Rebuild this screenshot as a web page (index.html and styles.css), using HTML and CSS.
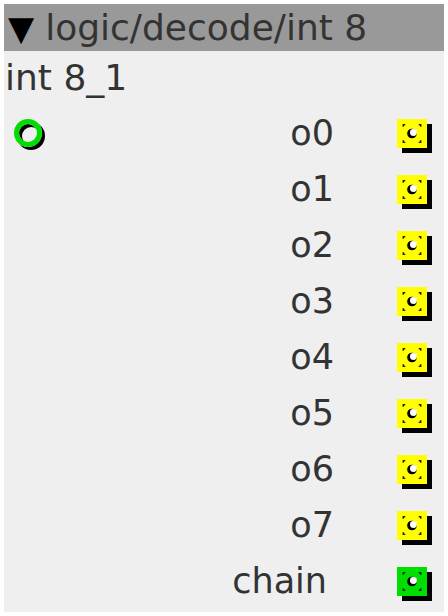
FILE: index.html
```html
<!DOCTYPE html>
<html lang="en">
<head>
  <meta charset="UTF-8" />
  <title>logic/decode/int 8</title>
  <link rel="stylesheet" href="styles.css">
</head>
<body>
  <div class="node">
    <div class="node-header">
      <span class="caret">&#9660;</span>
      <span class="node-title">logic/decode/int 8</span>
    </div>
    <div class="node-name">int 8_1</div>

    <div class="node-body">
      <div class="inlets">
        <div class="port-row">
          <span class="inlet"></span>
        </div>
      </div>

      <div class="outlets">
        <div class="port-row"><span class="label">o0</span><span class="outlet"><svg viewBox="0 0 30 30"><use href="#jack"/></svg></span></div>
        <div class="port-row"><span class="label">o1</span><span class="outlet"><svg viewBox="0 0 30 30"><use href="#jack"/></svg></span></div>
        <div class="port-row"><span class="label">o2</span><span class="outlet"><svg viewBox="0 0 30 30"><use href="#jack"/></svg></span></div>
        <div class="port-row"><span class="label">o3</span><span class="outlet"><svg viewBox="0 0 30 30"><use href="#jack"/></svg></span></div>
        <div class="port-row"><span class="label">o4</span><span class="outlet"><svg viewBox="0 0 30 30"><use href="#jack"/></svg></span></div>
        <div class="port-row"><span class="label">o5</span><span class="outlet"><svg viewBox="0 0 30 30"><use href="#jack"/></svg></span></div>
        <div class="port-row"><span class="label">o6</span><span class="outlet"><svg viewBox="0 0 30 30"><use href="#jack"/></svg></span></div>
        <div class="port-row"><span class="label">o7</span><span class="outlet"><svg viewBox="0 0 30 30"><use href="#jack"/></svg></span></div>
        <div class="port-row"><span class="label chain-label">chain</span><span class="outlet chain"><svg viewBox="0 0 30 30"><use href="#jack"/></svg></span></div>
      </div>
    </div>
  </div>

  <!-- shared jack glyph -->
  <svg class="defs" width="0" height="0">
    <defs>
      <g id="jack">
        <path d="M6 8v-2h2 M22 6h2v2 M6 22v2h2 M24 22v2h-2" fill="none" stroke="#222" stroke-width="1.5"/>
        <circle cx="15" cy="15" r="5" fill="#000"/>
        <circle cx="16.5" cy="14" r="3.6" fill="#fff"/>
      </g>
    </defs>
  </svg>
</body>
</html>
```

FILE: styles.css
```css
* {
  box-sizing: border-box;
  margin: 0;
  padding: 0;
}

body {
  background: #ffffff;
  font-family: 'DejaVu Sans', sans-serif;
  color: #333333;
}

.node {
  margin: 4px;
  width: 440px;
  height: 608px;
  background: #efefef;
}

.node-header {
  height: 47px;
  background: #999999;
  display: flex;
  align-items: center;
  gap: 11px;
  padding-left: 4px;
  font-size: 36px;
}

.caret {
  color: #000000;
  font-size: 34px;
}

.node-name {
  height: 54px;
  font-size: 36px;
  line-height: 54px;
  padding-left: 1px;
}

.node-body {
  display: flex;
  justify-content: space-between;
}

.inlets {
  padding-left: 10px;
}

.port-row {
  height: 56px;
  display: flex;
  align-items: center;
  justify-content: flex-end;
}

.label {
  font-size: 35px;
  margin-right: 63px;
}

.chain-label {
  margin-right: 70px;
}

.inlet {
  width: 28px;
  height: 28px;
  border: 5px solid #00dd00;
  border-radius: 50%;
  box-shadow: 3px 3px 0 #000000, inset 3px 3px 0 #000000;
}

.outlet {
  width: 30px;
  height: 29px;
  margin-right: 17px;
  background: #ffff00;
  box-shadow: 5px 5px 0 #000000;
}

.outlet svg {
  display: block;
  width: 30px;
  height: 29px;
}

.outlet.chain {
  background: #00dd00;
}

.defs {
  position: absolute;
}
```
